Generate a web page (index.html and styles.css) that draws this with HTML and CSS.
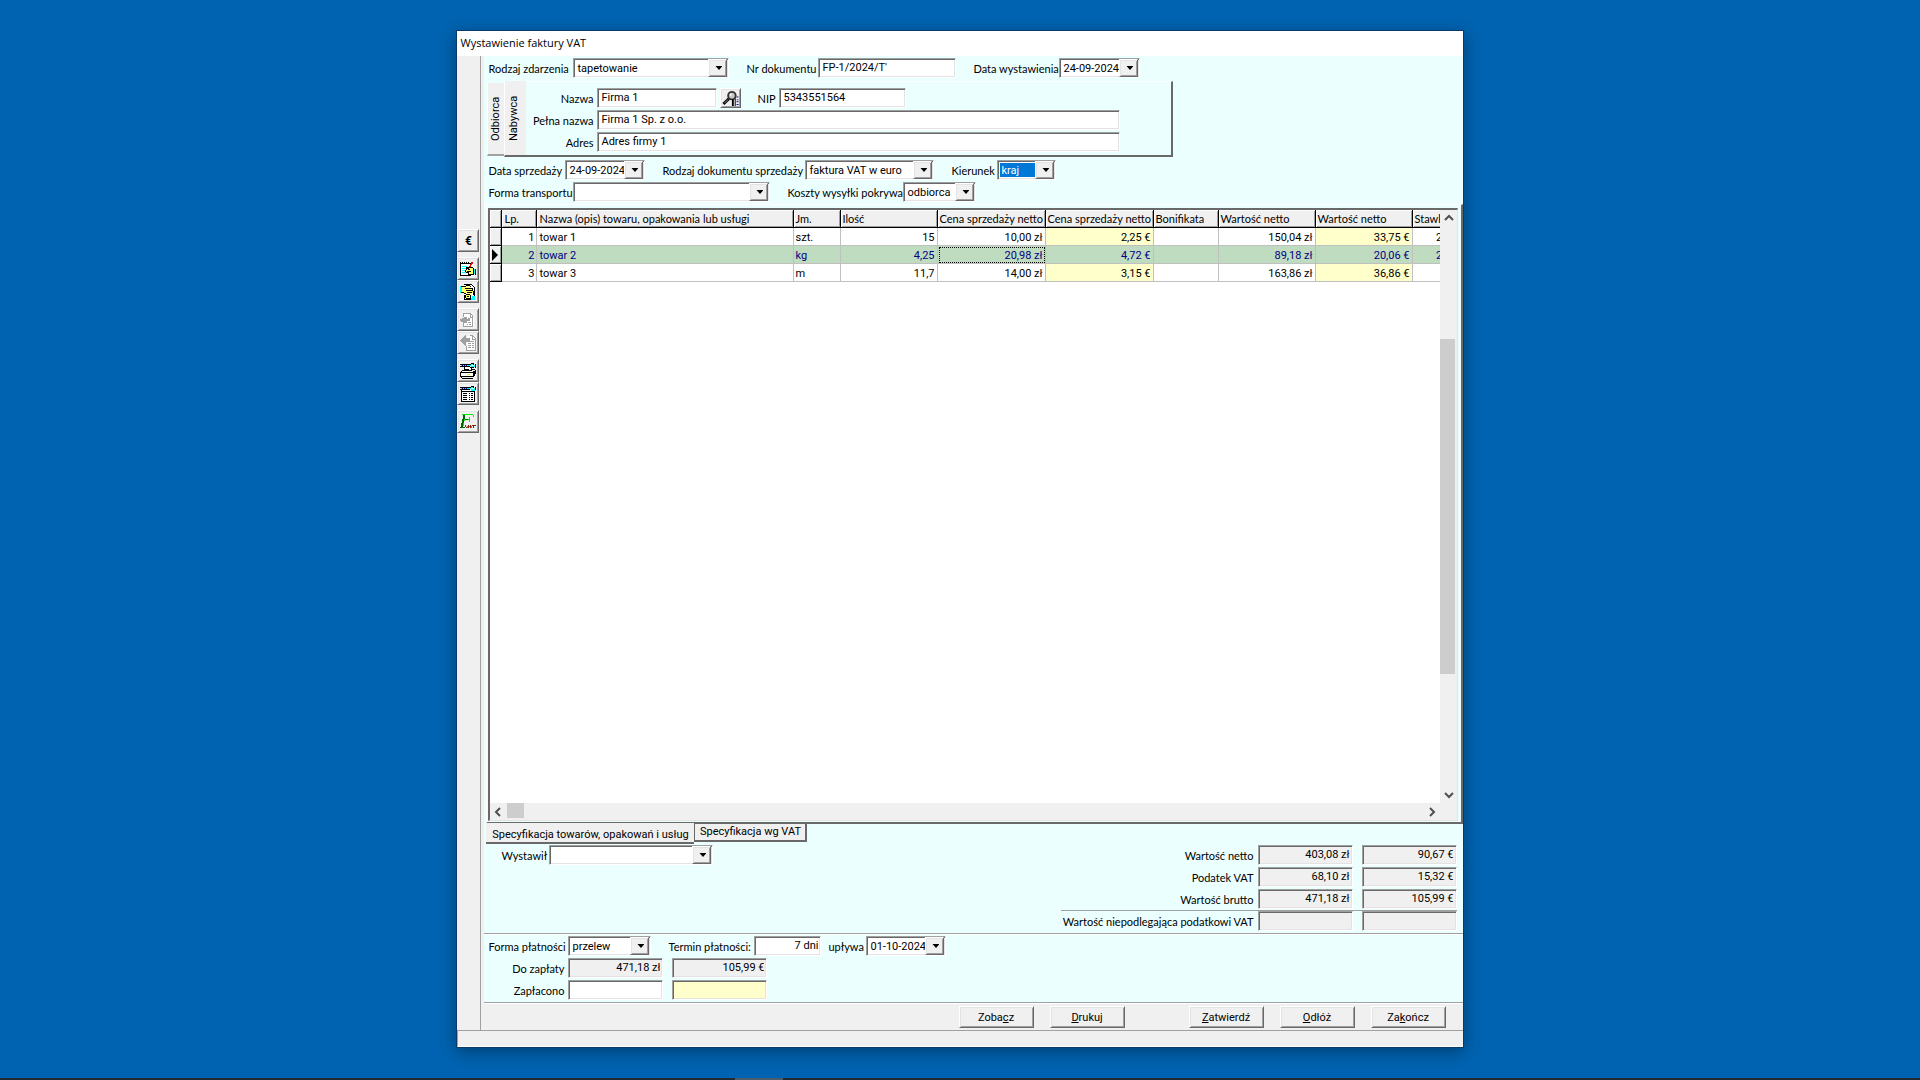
FILE: index.html
```html
<!DOCTYPE html>
<html lang="pl">
<head>
<meta charset="utf-8">
<title>Wystawienie faktury VAT</title>
<link rel="stylesheet" href="styles.css">
</head>
<body>
<main class="window">
  <h1 class="titlebar">Wystawienie faktury VAT</h1>
  <div class="workspace">
    <nav class="toolbar" aria-label="Narzędzia">
      <div class="tool-group">
        <button class="tool tool--text" type="button" aria-label="Euro">€</button>
      </div>
      <div class="tool-group">
        <button class="tool" type="button" aria-label="Edytuj">
          <svg viewBox="0 0 16 16"><path fill="#fff" d="M1 2h12v13H1z"/><path fill="#000" d="M0 1h1v1H0zM2 1h1v1H2zM4 1h1v1H4zM6 1h1v1H6zM8 1h1v1H8zM0 2h11v1H0zM0 3h1v12H0zM1 14h10v1H1z"/><path fill="#0ff" d="M2 5h5v1H2zM2 7h4v1H2zM2 9h3v1H2zM2 11h4v1H2zM14 8h2v5h-2z"/><path fill="#f00" d="M11 1h2v2h-1v1h-1v2h-1v1H9V5h1V3h1z"/><path fill="#ff6" d="M8 7h6v6H9v-2H6V9h2z"/><path fill="#000" d="M6 6h5v1H9v1H7v1H6zM5 9h1v2H5zM6 11h3v2H8v-1H6zM8 13h6v1H8zM13 7h1v6h-1zM11 6h2v1h-2zM15 8h1v6h-1zM8 8h2v1H8zM7 10h4v1H7z"/></svg>
        </button>
        <button class="tool" type="button" aria-label="Przeglądaj">
          <svg viewBox="0 0 16 16"><path fill="#fff" d="M4 0h8l3 3v12H4z"/><path fill="#000" d="M4 0h8v1H4zM12 1h1v1h-1zM13 2h1v1h-1zM14 3h1v12h-1zM4 15h8v1H4zM4 11h1v5H4z"/><path fill="#0ff" d="M0 2h2v7H0zM11 12h4v4h-4z"/><path fill="#ff6" d="M2 3h5v-1h3v2h3v5h-2v2H7V9H3V8H2zM6 10h6v4H6z"/><path fill="#000" d="M2 2h4v1H2zM6 1h4v1H6zM10 2h1v1h-1zM5 4h7v1H5zM6 6h7v1H6zM7 8h5v1H7zM2 8h2v1H2zM4 9h2v1H4zM6 10h4v1H6zM12 4h1v2h-1zM13 7h1v4h-1zM5 11h1v3H5zM7 12h2v1H7zM10 11h1v3h-1zM6 14h5v1H6zM1 2h1v1H1zM1 8h1v1H1z"/></svg>
        </button>
      </div>
      <div class="tool-group">
        <button class="tool" type="button" aria-label="Wstaw dokument" disabled>
          <svg viewBox="0 0 16 16"><path fill="#fff" d="M4 2h6l4 3v10H4z"/><path fill="#a0a0a0" d="M3 1h8v1H3zM11 2h1v1h-1zM12 3h1v12h-1zM3 14h9v1H3zM3 2h1v3H3zM3 11h1v3H3zM10 2h1v3h2v1h-3zM0 7h2V6h2V5h3v2h3v2H7v2H3v-1H1V9H0zM8 6h2v1H8zM8 10h3v1H8zM7 12h1v1H7zM9 12h2v1H9z"/></svg>
        </button>
        <button class="tool" type="button" aria-label="Pobierz dokument" disabled>
          <svg viewBox="0 0 16 16"><path fill="#fff" d="M7 1h5l4 3v12H7z"/><path fill="#a0a0a0" d="M0 5h1V4h1V3h1V2h1V1h1V0h1v3h4v4H6v4H5v-1H4V9H3V8H2V7H1V6H0zM10 0h3v1h-3zM13 1h1v1h-1zM14 2h1v1h-1zM15 3h1v13h-1zM6 15h9v1H6zM6 11h1v4H6zM12 1h1v3h2v1h-3zM8 8h3v1H8zM12 8h2v1h-2zM8 10h3v1H8zM12 10h2v1h-2zM8 12h3v1H8zM12 12h2v1h-2zM10 6h4v1h-4z"/></svg>
        </button>
      </div>
      <div class="tool-group">
        <button class="tool" type="button" aria-label="Ustawienia druku">
          <svg viewBox="0 0 16 16"><path fill="#fff" d="M5 4h6v2H5zM2 8h10v1H2zM1 10h12v3H1z"/><path fill="#000" d="M0 1h10v1H0zM0 3h10v1H0zM11 0h3v1h-3zM10 1h1v1h-1zM13 1h1v1h-1zM15 1h1v4h-1zM10 4h4v1h-4zM4 4h1v3H4zM11 5h1v3h-1zM5 6h4v1H5zM2 7h10v1H2zM1 8h1v1H1zM0 9h13v1H0zM0 10h1v4H0zM1 13h13v1H1zM13 8h2v5h-2zM2 15h11v1H2zM1 14h1v1H1zM15 7h1v4h-1zM12 6h3v1h-3z"/><path fill="#0ff" d="M1 2h10v1H1zM11 1h2v1h-2zM11 3h4v1h-4zM14 2h1v1h-1z"/><path fill="#008" d="M2 2h1v1H2zM4 2h1v1H4zM6 2h1v1H6z"/><path fill="#fe0" d="M7 11h3v1H7z"/></svg>
        </button>
        <button class="tool" type="button" aria-label="Ustawienia zestawienia">
          <svg viewBox="0 0 16 16"><path fill="#fff" d="M2 4h12v11H2z"/><path fill="#000" d="M0 1h10v1H0zM0 3h10v1H0zM11 0h3v1h-3zM10 1h1v1h-1zM13 1h1v1h-1zM15 1h1v3h-1zM10 5h5v1h-5zM1 4h1v12H1zM14 4h1v12h-1zM2 15h12v1H2zM2 5h8v1H2zM3 7h4v1H3zM9 7h1v1H9zM11 7h2v1h-2zM3 9h4v1H3zM9 9h1v1H9zM11 9h2v1h-2zM3 11h4v1H3zM9 11h1v1H9zM11 11h2v1h-2zM3 13h4v1H3zM9 13h1v1H9zM11 13h2v1h-2z"/><path fill="#0ff" d="M1 2h10v1H1zM11 1h2v1h-2zM11 3h4v2h-4zM14 2h1v1h-1z"/><path fill="#008" d="M2 2h1v1H2zM4 2h1v1H4zM6 2h1v1H6z"/></svg>
        </button>
      </div>
      <div class="tool-group">
        <button class="tool" type="button" aria-label="Faktura VAT">
          <svg viewBox="0 0 16 16"><path fill="#0e0" d="M2 0h11v1h1v2h-1V1H5v4h4V3h1v5H9V6H5v1H4v5H3V6h1V1H2z"/><path fill="#060" d="M3 1h2v4H4v4H3v4h2v1H0v-1h1V9h1V5h1zM5 5h3v1H5z"/><path fill="#820" d="M5 11h1v2h1v1H6v-1H5zM8 11h1v3H8zM10 11h1v3h-1zM12 11h4v1h-2v2h-1v-2h-1z"/><path fill="#880" d="M7 12h1v2H7zM9 12h1v1H9zM11 12h1v2h-1z"/></svg>
        </button>
      </div>
    </nav>

    <form class="invoice">
      <section class="header-fields">
        <div class="row">
          <div class="field field--event"><label for="event">Rodzaj zdarzenia</label><span class="combo"><select id="event"><option>tapetowanie</option></select></span></div>
          <div class="field field--number"><label for="number">Nr dokumentu</label><input id="number" value="FP-1/2024/T'"></div>
          <div class="field field--issued"><label for="issued">Data wystawienia</label><span class="combo"><select id="issued"><option>24-09-2024</option></select></span></div>
        </div>

        <div class="party">
          <div class="party-tabs">
            <button type="button" class="side-tab">Odbiorca</button>
            <button type="button" class="side-tab side-tab--active">Nabywca</button>
          </div>
          <div class="party-fields">
            <div class="party-row">
              <div class="field field--party-name"><label for="name">Nazwa</label><input id="name" value="Firma 1"></div>
              <button class="lookup" type="button" aria-label="Szukaj kontrahenta">
                <svg viewBox="0 0 17 17"><path fill="none" stroke="#000" stroke-width="3" d="M1 15l6-6"/><path stroke="#999" d="M2 14l4-4"/><circle cx="10" cy="6" r="4" fill="#c8c8c8" stroke="#333" stroke-width="2"/><path fill="#fff" d="M8 4h2v1H9v1H8z"/><path fill="#000" d="M10 10h2v7h-2zM13 9h1v8h-1z"/><path fill="#008" d="M15 7h2v1h-2zM15 10h2v1h-2zM15 12h2v1h-2zM15 15h2v1h-2z"/></svg>
              </button>
              <div class="field field--nip"><label for="nip">NIP</label><input id="nip" value="5343551564"></div>
            </div>
            <div class="field field--party-wide"><label for="fullname">Pełna nazwa</label><input id="fullname" value="Firma 1 Sp. z o.o."></div>
            <div class="field field--party-wide"><label for="address">Adres</label><input id="address" value="Adres firmy 1"></div>
          </div>
        </div>

        <div class="row">
          <div class="field field--sold"><label for="sold">Data sprzedaży</label><span class="combo"><select id="sold"><option>24-09-2024</option></select></span></div>
          <div class="field field--doctype"><label for="doctype">Rodzaj dokumentu sprzedaży</label><span class="combo"><select id="doctype"><option>faktura VAT w euro</option></select></span></div>
          <div class="field field--direction"><label for="direction">Kierunek</label><span class="combo combo--focused"><select id="direction"><option>kraj</option></select></span></div>
        </div>
        <div class="row">
          <div class="field field--transport"><label for="transport">Forma transportu</label><span class="combo"><select id="transport"><option></option></select></span></div>
          <div class="field field--shipping"><label for="shipping">Koszty wysyłki pokrywa</label><span class="combo"><select id="shipping"><option>odbiorca</option></select></span></div>
        </div>
      </section>

      <section class="items">
        <div class="grid">
          <div class="grid-view">
            <table>
              <colgroup><col class="c-mark"><col class="c-no"><col><col class="c-unit"><col class="c-sum"><col class="c-price"><col class="c-price"><col class="c-discount"><col class="c-sum"><col class="c-sum"><col class="c-rate"></colgroup>
              <thead><tr><th></th><th>Lp.</th><th>Nazwa (opis) towaru, opakowania lub usługi</th><th>Jm.</th><th>Ilość</th><th>Cena sprzedaży netto</th><th>Cena sprzedaży netto</th><th>Bonifikata</th><th>Wartość netto</th><th>Wartość netto</th><th>Stawka</th></tr></thead>
              <tbody>
                <tr><th></th><td class="num">1</td><td>towar 1</td><td>szt.</td><td class="num">15</td><td class="num">10,00 zł</td><td class="num euro">2,25 €</td><td></td><td class="num">150,04 zł</td><td class="num euro">33,75 €</td><td class="num">23%</td></tr>
                <tr class="selected"><th><svg class="marker" viewBox="0 0 6 12"><path d="M0 0l6 6-6 6z"/></svg></th><td class="num">2</td><td>towar 2</td><td>kg</td><td class="num">4,25</td><td class="num current">20,98 zł</td><td class="num euro">4,72 €</td><td></td><td class="num">89,18 zł</td><td class="num euro">20,06 €</td><td class="num">23%</td></tr>
                <tr><th></th><td class="num">3</td><td>towar 3</td><td>m</td><td class="num">11,7</td><td class="num">14,00 zł</td><td class="num euro">3,15 €</td><td></td><td class="num">163,86 zł</td><td class="num euro">36,86 €</td><td class="num">8%</td></tr>
              </tbody>
            </table>
          </div>
          <div class="scroll scroll--v">
            <svg viewBox="0 0 17 17"><path d="M5 10l4-4 4 4"/></svg>
            <div class="track"><div class="thumb"></div></div>
            <svg viewBox="0 0 17 17"><path d="M5 7l4 4 4-4"/></svg>
          </div>
          <div class="scroll scroll--h">
            <svg viewBox="0 0 17 17"><path d="M10 5L6 9l4 4"/></svg>
            <div class="thumb"></div>
            <svg class="scroll-end" viewBox="0 0 17 17"><path d="M7 5l4 4-4 4"/></svg>
          </div>
        </div>
      </section>
      <div class="sheet-tabs">
        <button type="button" class="sheet-tab sheet-tab--active">Specyfikacja towarów, opakowań i usług</button>
        <button type="button" class="sheet-tab">Specyfikacja wg VAT</button>
      </div>

      <section class="summary">
        <div class="field field--issuer"><label for="issuer">Wystawił</label><span class="combo"><select id="issuer"><option></option></select></span></div>
        <div class="totals">
          <div class="total"><label for="net">Wartość netto</label><input id="net" class="amount" readonly value="403,08 zł"><input class="amount" aria-label="Wartość netto w euro" readonly value="90,67 €"></div>
          <div class="total"><label for="vat">Podatek VAT</label><input id="vat" class="amount" readonly value="68,10 zł"><input class="amount" aria-label="Podatek VAT w euro" readonly value="15,32 €"></div>
          <div class="total"><label for="gross">Wartość brutto</label><input id="gross" class="amount" readonly value="471,18 zł"><input class="amount" aria-label="Wartość brutto w euro" readonly value="105,99 €"></div>
          <div class="total total--exempt"><label for="exempt">Wartość niepodlegająca podatkowi VAT</label><input id="exempt" class="amount" readonly><input class="amount" aria-label="Wartość niepodlegająca w euro" readonly></div>
        </div>
      </section>

      <section class="payment">
        <div class="row">
          <div class="field field--method"><label for="method">Forma płatności</label><span class="combo"><select id="method"><option>przelew</option></select></span></div>
          <div class="field field--term"><label for="term">Termin płatności:</label><input id="term" class="amount" value="7 dni"></div>
          <div class="field field--due"><label for="due">upływa</label><span class="combo"><select id="due"><option>01-10-2024</option></select></span></div>
        </div>
        <div class="pay-line"><label for="topay">Do zapłaty</label><input id="topay" class="amount" readonly value="471,18 zł"><input class="amount" aria-label="Do zapłaty w euro" readonly value="105,99 €"></div>
        <div class="pay-line"><label for="paid">Zapłacono</label><input id="paid" class="amount"><input class="amount amount--euro" aria-label="Zapłacono w euro"></div>
      </section>

      <footer class="actions">
        <div class="action-group">
          <button type="button">Zoba<u>c</u>z</button>
          <button type="button"><u>D</u>rukuj</button>
        </div>
        <div class="action-group">
          <button type="button"><u>Z</u>atwierdź</button>
          <button type="button"><u>O</u>dłóż</button>
          <button type="button">Za<u>k</u>ończ</button>
        </div>
      </footer>
    </form>
  </div>
  <div class="statusbar"></div>
</main>
<div class="taskbar"><span></span></div>
</body>
</html>
```

FILE: styles.css
```css
:root {
  --face: #f0f0f0;
  --form: #ebffff;
  --light: #e3e3e3;
  --mid: #a0a0a0;
  --dark: #696969;
  --euro: #ffffcc;
}

* { box-sizing: border-box; }

body {
  margin: 0;
  min-height: 100vh;
  display: flex;
  flex-direction: column;
  align-items: center;
  background: #0063b1;
  color: #000;
  font: 11px/14px Roboto, "Liberation Sans", Arial, sans-serif;
}

button, input, select { font: inherit; color: inherit; margin: 0; border-radius: 0; }

.window {
  flex: 1;
  display: flex;
  flex-direction: column;
  width: 52.45%;
  min-width: 1000px;
  margin: 30px 0;
  border: 1px solid #0a3a66;
  background: var(--face);
  box-shadow: 0 4px 16px rgba(0, 0, 0, .35);
}

.titlebar {
  margin: 0;
  padding: 0 3px;
  background: #fff;
  font: 11px/24px "Open Sans", "Noto Sans", sans-serif;
  height: 25px;
}

.workspace { flex: 1; display: flex; }

/* Left tool strip */
.toolbar {
  width: 24px;
  padding-top: 173px;
  border-right: 1px solid var(--mid);
}
.tool-group { margin-bottom: 5px; }
.tool {
  display: grid;
  place-items: center;
  width: 22px;
  height: 23px;
  padding: 0;
}
.tool svg { width: 16px; height: 16px; shape-rendering: crispEdges; }
.tool--text { font-weight: bold; font-size: 12px; }

.tool, .lookup, .actions button, .combo::after {
  background-color: var(--face);
  border: 1px solid;
  border-color: #fff var(--dark) var(--dark) #fff;
  box-shadow: inset 1px 1px var(--light), inset -1px -1px var(--mid);
}

/* Form */
.invoice {
  flex: 1;
  min-width: 0;
  display: flex;
  flex-direction: column;
  margin-left: 3px;
  background: var(--form);
}

.header-fields { padding: 2px 4px 0; }
.row { display: flex; gap: 17px; margin-bottom: 2px; }
.field { display: grid; column-gap: 4px; align-items: center; }
label { white-space: nowrap; padding-top: 2px; }
label, th { font-family: Lato, "Liberation Sans", sans-serif; }

.field--event { grid-template-columns: 81px 156px; }
.field--number { grid-template-columns: 68px 138px; }
.field--issued { grid-template-columns: 82px 81px; }
.field--sold { grid-template-columns: 73px 80px; }
.field--doctype { grid-template-columns: 139px 129px; }
.field--direction { grid-template-columns: 42px 59px; }
.field--transport { grid-template-columns: 85px 197px; column-gap: 0; }
.field--shipping { grid-template-columns: 115px 73px; column-gap: 1px; }
.field--issuer { grid-template-columns: 44px 164px; }
.field--method { grid-template-columns: 76px 83px; }
.field--term { grid-template-columns: 82px 67px; }
.field--due { grid-template-columns: 34px 80px; margin-left: -10px; }

input, select {
  width: 100%;
  min-width: 0;
  height: 20px;
  padding: 0 3px 2px;
  border: 1px solid;
  border-color: var(--mid) #fff #fff var(--mid);
  box-shadow: inset 1px 1px var(--dark), inset -1px -1px var(--light);
  background: #fff;
  outline: 0;
}
select { appearance: none; padding: 2px 3px 0; }

.combo { display: grid; }
.combo > select, .combo::before, .combo::after { grid-area: 1 / 1; }
.combo::before, .combo::after {
  content: "";
  justify-self: end;
  align-self: center;
  pointer-events: none;
}
.combo::after { width: 17px; height: 16px; margin-right: 2px; }
.combo::before {
  z-index: 1;
  width: 7px;
  height: 4px;
  margin-right: 7px;
  background: #000;
  clip-path: polygon(0 0, 100% 0, 50% 100%);
}
.combo--focused select {
  color: #fff;
  background: linear-gradient(#0078d7, #0078d7) 2px 2px / 37px 14px no-repeat #fff;
}

/* Buyer / recipient panel */
.party { display: flex; width: 686px; height: 76px; margin: 3px 0; margin-left: -1px; }
.party-tabs { display: flex; align-items: flex-start; }
.side-tab {
  width: 17px;
  height: 73px;
  margin-top: 2px;
  padding: 0;
  border: 0;
  border-right: 1px solid #fff;
  border-top: 2px solid var(--mid);
  background: var(--face);
  writing-mode: vertical-rl;
  transform: rotate(180deg);
}
.side-tab--active { width: 22px; height: 76px; margin-top: 0; padding-left: 4px; border-top-color: var(--dark); }
.party-fields {
  flex: 1;
  display: grid;
  align-content: start;
  row-gap: 2px;
  padding-top: 6px;
  border: 1px solid;
  border-color: #fff var(--dark) var(--dark) transparent;
  border-width: 1px 2px 2px 0;
}
.party-row { display: flex; }
.field--party-name { grid-template-columns: 67px 120px; }
.field--party-wide { grid-template-columns: 67px 523px; }
.field--nip { grid-template-columns: 18px 127px; margin-left: 16px; }
.party-fields label { text-align: right; }
.lookup { display: grid; place-items: center; width: 21px; height: 20px; margin-left: 3px; padding: 0; }
.lookup svg { width: 17px; height: 16px; }

/* Items grid */
.items {
  flex: 1;
  display: flex;
  margin-left: 2px;
  padding: 3px 3px 1px 1px;
  border: 1px solid;
  border-color: #fff var(--dark) var(--dark) #fff;
  border-width: 1px 2px 2px 1px;
}
.grid {
  flex: 1;
  min-width: 0;
  display: grid;
  grid-template: 1fr 17px / minmax(0, 1fr) 17px;
  border: 2px solid;
  border-color: var(--dark) var(--light) var(--light) var(--dark);
  border-width: 2px 1px 1px 2px;
  background: #fff;
}
.grid-view { overflow: hidden; }
table { width: calc(100% + 20px); table-layout: fixed; border-collapse: separate; border-spacing: 0; }
.c-mark { width: 12px; }
.c-no { width: 35px; }
.c-unit { width: 47px; }
.c-sum { width: 97px; }
.c-price { width: 108px; }
.c-discount { width: 65px; }
.c-rate { width: 47px; }
th, td { height: 18px; padding: 1px 2px 0; font-weight: normal; text-align: left; white-space: nowrap; line-height: 14px; }
td { padding-top: 2px; }
th {
  border: solid #000;
  border-width: 0 1px 1px 0;
  background: var(--face);
  box-shadow: inset 1px 1px #fff, inset -1px -1px var(--mid);
}
td { border: solid #c0c0c0; border-width: 0 1px 1px 0; }
.num { text-align: right; }
.euro { background: var(--euro); }
.selected td { background: #c0dcc0; color: #000080; }
.selected .current { outline: 1px dotted #000; outline-offset: -2px; }
.marker { display: block; width: 6px; height: 12px; }

.scroll { display: flex; background: var(--face); }
.scroll svg { width: 17px; height: 17px; fill: none; stroke: #505050; stroke-width: 2; }
.scroll--v { flex-direction: column; }
.scroll--h { grid-column: 1 / -1; padding-right: 17px; }
.scroll-end { margin-left: auto; }
.track { flex: 1; display: grid; grid-template-rows: 20fr 60fr 20fr; }
.thumb { background: #cdcdcd; }
.track .thumb { grid-row: 2; width: 15px; }
.scroll--h .thumb { width: 17px; height: 15px; }

.sheet-tabs { display: flex; align-items: flex-start; margin-left: 2px; margin-top: -1px; }
.sheet-tab {
  width: 113px;
  height: 19px;
  padding: 0;
  border: 1px solid var(--dark);
  border-width: 1px 2px 2px 1px;
  background: var(--face);
  white-space: nowrap;
}
.sheet-tab--active { width: 208px; height: 21px; border-width: 0 0 2px; padding-top: 4px; }

/* Totals */
.summary { display: flex; justify-content: space-between; align-items: flex-start; padding: 1px 6px 2px 17px; }
.total {
  display: grid;
  grid-template-columns: 188px 95px 95px;
  column-gap: 9px;
  align-items: center;
  padding-bottom: 2px;
}
.total label, .pay-line label { text-align: right; margin-right: -5px; }
.total--exempt { border-top: 1px solid var(--mid); margin-top: -1px; padding-bottom: 0; }
.amount { text-align: right; padding-right: 2px; }
.amount[readonly] { background: var(--face); }
.amount--euro { background: var(--euro); }

/* Payment */
.payment { padding: 2px 4px 0; border-top: 1px solid var(--mid); box-shadow: inset 0 1px #fff; }
.pay-line {
  display: grid;
  grid-template-columns: 71px 95px 95px;
  column-gap: 9px;
  align-items: center;
  margin-bottom: 2px;
}

/* Action buttons */
.actions {
  display: flex;
  justify-content: flex-end;
  gap: 64px;
  padding: 3px 17px 2px;
  border-top: 1px solid var(--mid);
  box-shadow: inset 0 1px #fff;
  background: var(--face);
}
.action-group { display: flex; gap: 16px; }
.actions button { width: 75px; height: 22px; padding: 1px 0 0; }

.statusbar { height: 17px; border-top: 1px solid var(--mid); border-left: 1px solid var(--mid); border-bottom: 1px solid #fff; }

.taskbar { align-self: stretch; height: 2px; background: #1f2a33; }
.taskbar span { display: block; width: 48px; height: 2px; margin-left: 38.3%; background: #4c5d6c; }
```
